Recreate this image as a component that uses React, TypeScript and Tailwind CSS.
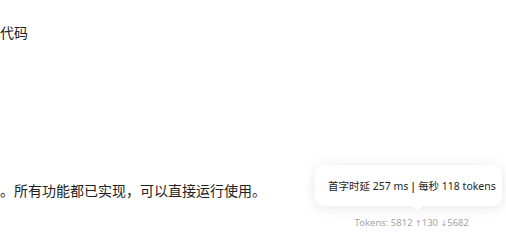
export default function App() {
  return (
    <div className="relative w-[506px] h-[243px] overflow-hidden bg-white text-[#222] font-['Noto_Sans','Noto_Sans_CJK_SC',sans-serif]">
      {/* message body, cut off on the left */}
      <p className="pt-[23px] text-[14px] leading-[20px]">代码</p>
      <p className="mt-[138px] text-[14px] leading-[20px]">。所有功能都已实现，可以直接运行使用。</p>

      {/* footer stats */}
      <div className="flex justify-end pr-[37px] mt-[16px]">
        <span className="text-[9.5px] leading-[12px] text-[#a3a3a3] whitespace-nowrap">
          Tokens: 5812 <span className="font-['DejaVu_Sans',sans-serif] text-[8px]">↑</span>130{" "}
          <span className="font-['DejaVu_Sans',sans-serif] text-[8px]">↓</span>5682
        </span>
      </div>

      {/* tooltip */}
      <div className="absolute left-[315px] top-[165px] w-[187px] h-[41px] rounded-[9px] bg-white shadow-[0_2px_14px_rgba(0,0,0,0.10)] flex items-center pl-[13px]">
        <span className="text-[10.5px] leading-[14px] text-[#1f1f1f] whitespace-nowrap">
          首字时延 257 ms<span className="mx-[2px] font-semibold">|</span>每秒 118 tokens
        </span>
        <span className="absolute left-[96px] bottom-[-5px] w-0 h-0 border-l-[6px] border-r-[6px] border-t-[6px] border-l-transparent border-r-transparent border-t-white" />
      </div>
    </div>
  );
}
